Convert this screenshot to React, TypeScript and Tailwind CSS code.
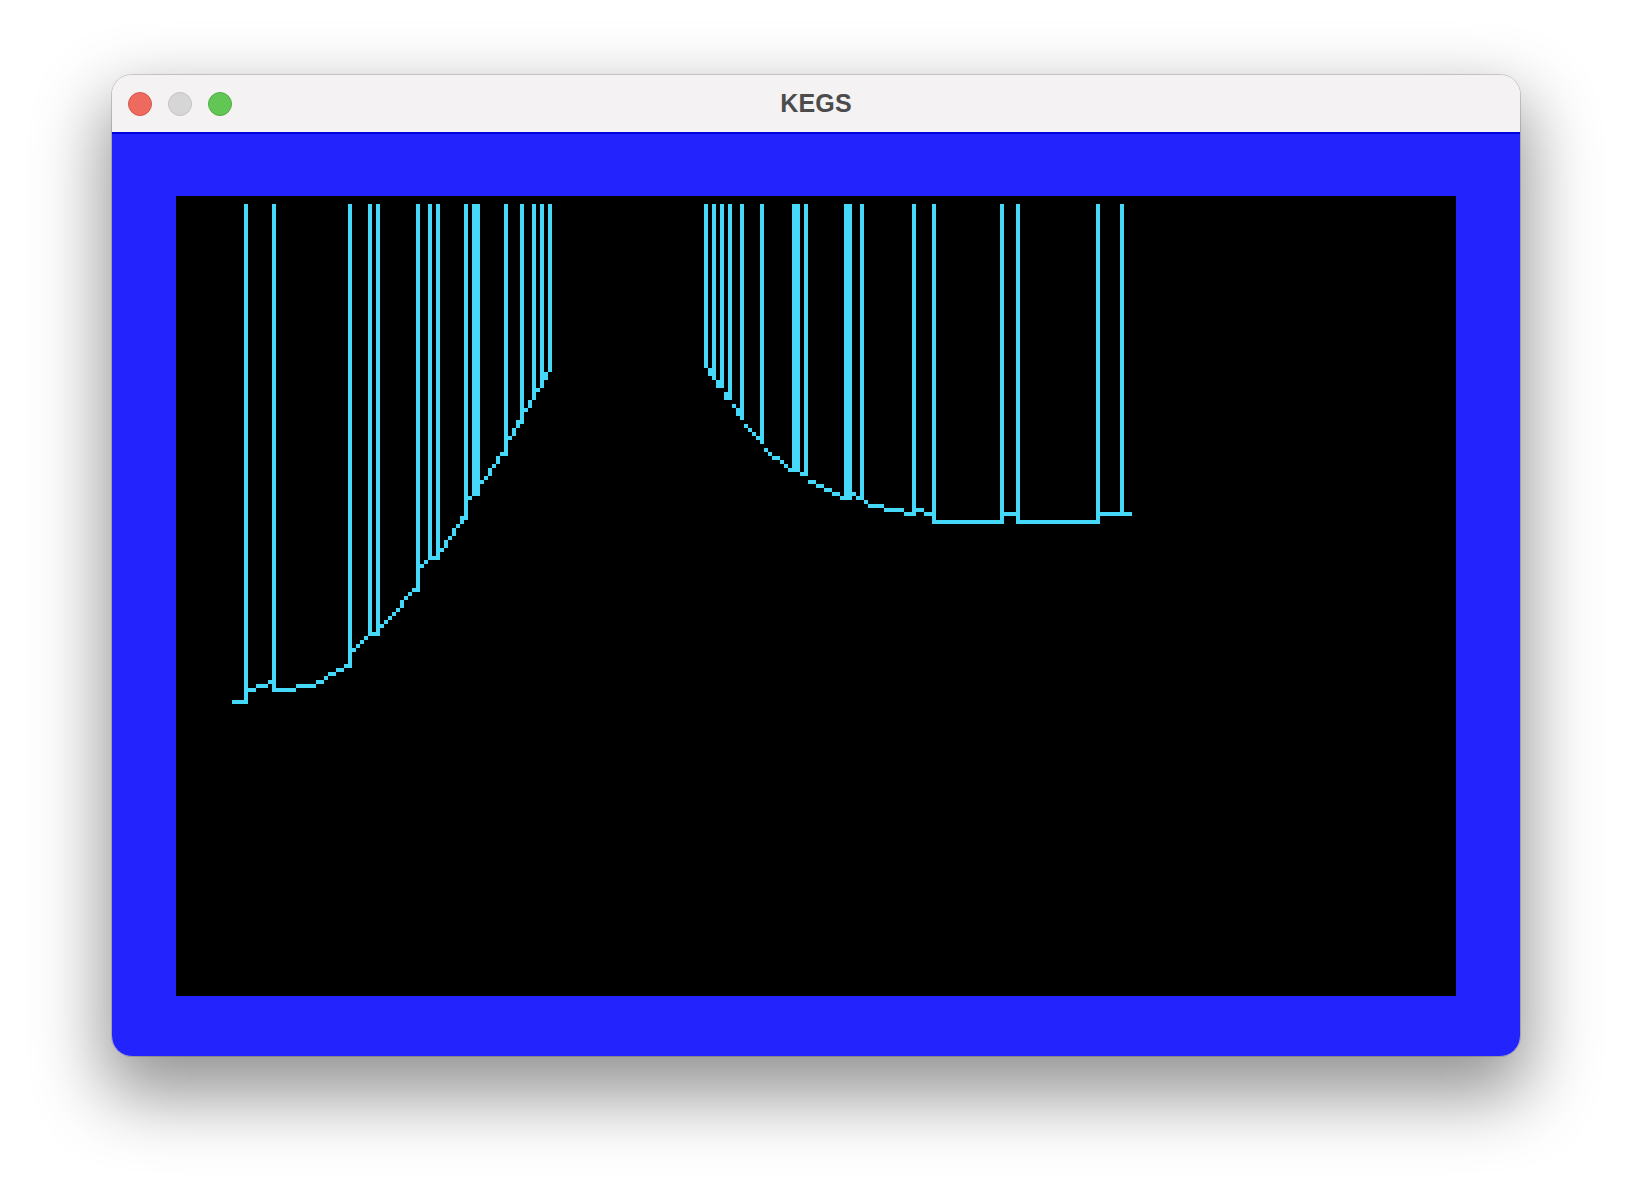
type Cell = [number, number, number, number];

const TOP = 204;

function snap(v: number) {
  return Math.round(v / 4) * 4;
}

function flat(x0: number, x1: number, y: number): Cell[] {
  return [[x0, y, x1 - x0, 4]];
}

// one cell per 4px column, stretched where the step is taller than a cell
function diag(x0: number, y0: number, x1: number, y1: number): Cell[] {
  const out: Cell[] = [];
  const n = (x1 - x0) / 4;
  let prev = 0;
  for (let i = 0; i <= n; i++) {
    const x = x0 + i * 4;
    const y = snap(y0 + ((y1 - y0) * i) / (n || 1));
    if (i > 0 && prev - y > 4) out.push([x, y, 4, prev - y]);
    else if (i > 0 && y - prev > 4) out.push([x, prev + 4, 4, y - prev]);
    else out.push([x, y, 4, 4]);
    prev = y;
  }
  return out;
}

// [x, width, bottom]
const leftBars: [number, number, number][] = [
  [244, 4, 704],
  [272, 4, 692],
  [348, 4, 668],
  [368, 4, 636],
  [376, 4, 636],
  [416, 4, 592],
  [428, 4, 560],
  [436, 4, 560],
  [464, 4, 520],
  [472, 8, 496],
  [504, 4, 456],
  [520, 4, 424],
  [532, 4, 400],
  [540, 4, 388],
  [548, 4, 372],
];

const leftCurve: Cell[] = [
  ...flat(232, 248, 700),
  ...flat(248, 256, 688),
  ...flat(256, 268, 684),
  ...flat(268, 272, 680),
  ...flat(276, 296, 688),
  ...flat(296, 316, 684),
  ...flat(316, 324, 680),
  ...flat(324, 328, 676),
  ...flat(328, 336, 672),
  ...flat(336, 344, 668),
  ...flat(344, 348, 664),
  ...diag(352, 648, 364, 636),
  ...flat(368, 380, 632),
  ...diag(380, 624, 412, 588),
  ...diag(420, 564, 424, 560),
  ...flat(428, 440, 556),
  ...diag(440, 548, 460, 516),
  ...diag(468, 496, 500, 452),
  ...diag(508, 436, 516, 420),
  ...diag(524, 408, 528, 400),
  ...flat(536, 540, 388),
  [544, 372, 4, 8],
];

const rightBars: [number, number, number][] = [
  [704, 4, 368],
  [712, 4, 380],
  [720, 4, 388],
  [728, 4, 400],
  [740, 4, 420],
  [760, 4, 444],
  [792, 8, 472],
  [804, 4, 476],
  [844, 8, 496],
  [860, 4, 500],
  [912, 4, 516],
  [932, 4, 524],
  [1000, 4, 524],
  [1016, 4, 524],
  [1096, 4, 524],
  [1120, 4, 516],
];

const rightCurve: Cell[] = [
  [708, 368, 4, 8],
  [716, 380, 4, 8],
  [724, 392, 4, 8],
  ...diag(732, 404, 736, 412),
  ...diag(744, 424, 756, 436),
  ...diag(764, 448, 768, 452),
  ...flat(772, 780, 456),
  ...diag(780, 460, 788, 468),
  ...flat(800, 804, 472),
  ...flat(808, 816, 480),
  ...flat(816, 824, 484),
  ...flat(824, 832, 488),
  ...flat(832, 840, 492),
  ...flat(840, 852, 496),
  ...flat(852, 856, 492),
  ...flat(856, 860, 496),
  ...flat(864, 868, 500),
  ...flat(868, 884, 504),
  ...flat(884, 904, 508),
  ...flat(904, 912, 512),
  ...flat(916, 924, 508),
  ...flat(924, 932, 512),
  ...flat(936, 1000, 520),
  ...flat(1004, 1016, 512),
  ...flat(1020, 1096, 520),
  ...flat(1100, 1132, 512),
];

function Plot() {
  const bars = [...leftBars, ...rightBars];
  const cells = [...leftCurve, ...rightCurve];
  return (
    <svg
      width={1280}
      height={800}
      viewBox="176 196 1280 800"
      shapeRendering="crispEdges"
      className="block"
    >
      <g fill="#45d8f8">
        {bars.map(([x, w, b], i) => (
          <rect key={`b${i}`} x={x} y={TOP} width={w} height={b - TOP} />
        ))}
        {cells.map(([x, y, w, h], i) => (
          <rect key={`c${i}`} x={x} y={y} width={w} height={h} />
        ))}
      </g>
    </svg>
  );
}

function Light({ className }: { className: string }) {
  return <div className={`h-6 w-6 rounded-full border ${className}`} />;
}

export default function App() {
  return (
    <div className="flex min-h-[1204px] justify-center bg-white pt-[75px]">
      <div className="h-fit w-[1408px] overflow-hidden rounded-[20px] shadow-[0_0_0_1px_rgba(0,0,0,0.16),0_32px_70px_8px_rgba(0,0,0,0.42)]">
        <div className="flex h-[57px] items-center bg-[#f4f2f3] px-4">
          <div className="flex flex-1 items-center gap-4">
            <Light className="border-[#d6564b] bg-[#ee6a5f]" />
            <Light className="border-[#c4c3c4] bg-[#d7d6d7]" />
            <Light className="border-[#50ac45] bg-[#62c655]" />
          </div>
          <div className="font-['Liberation_Sans',Arial,sans-serif] text-[25px] font-bold tracking-[0.2px] text-[#4c4c4c]">
            KEGS
          </div>
          <div className="flex-1" />
        </div>
        <div className="border-t-2 border-[#0000e0] bg-[#2323fe] px-16 pb-[60px] pt-[62px]">
          <div className="h-[800px] w-[1280px] bg-black">
            <Plot />
          </div>
        </div>
      </div>
    </div>
  );
}
